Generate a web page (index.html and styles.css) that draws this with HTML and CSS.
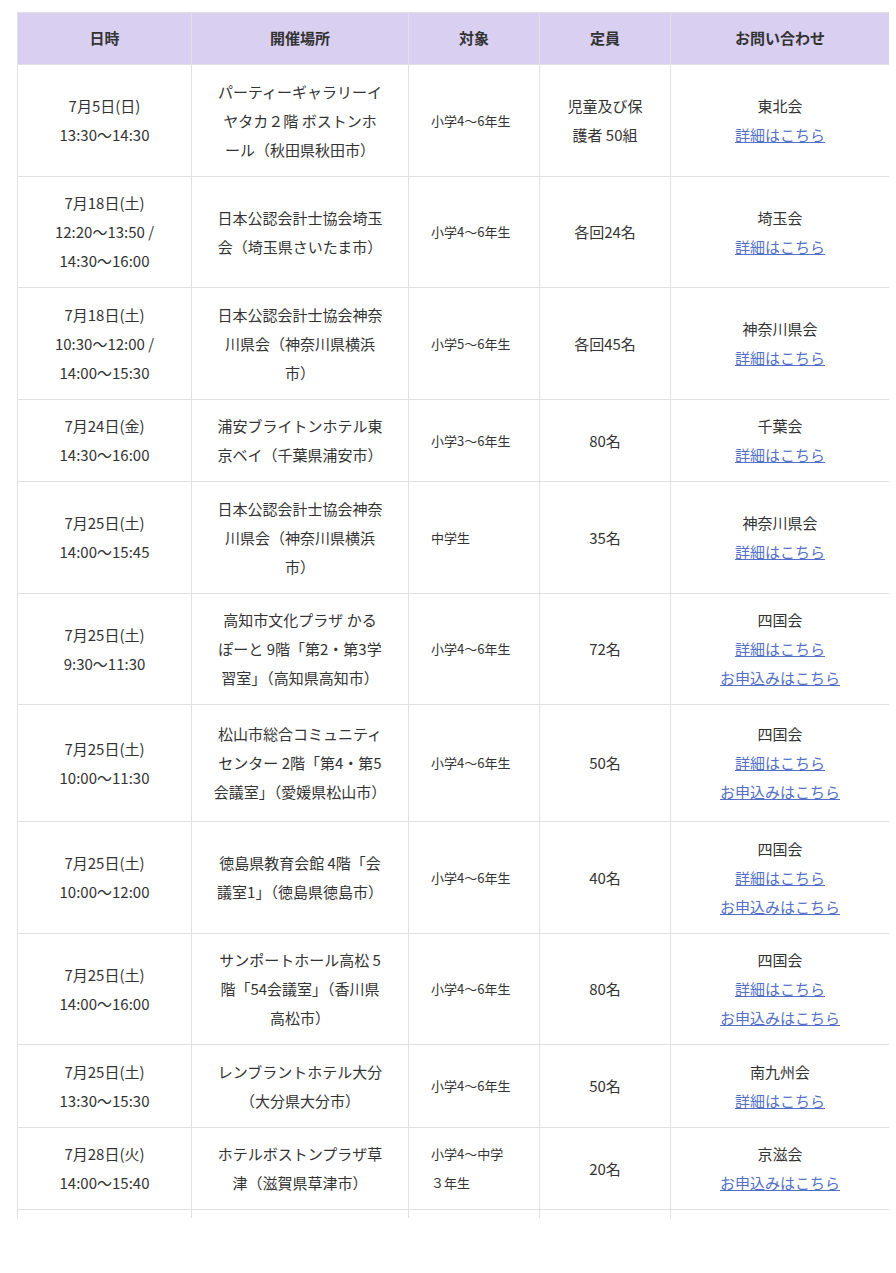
FILE: index.html
```html
<!DOCTYPE html>
<html lang="ja">
<head>
<meta charset="utf-8">
<title>開催一覧</title>
<link rel="stylesheet" href="styles.css">
</head>
<body>
<div class="frame">
<table class="events">
  <colgroup>
    <col class="c-date"><col class="c-venue"><col class="c-target"><col class="c-cap"><col class="c-contact">
  </colgroup>
  <thead>
    <tr><th>日時</th><th>開催場所</th><th>対象</th><th>定員</th><th>お問い合わせ</th></tr>
  </thead>
  <tbody>
    <tr>
      <td>7月5日(日)<br>13:30〜14:30</td>
      <td>パーティーギャラリーイ<br>ヤタカ２階 ボストンホ<br>ール（秋田県秋田市）</td>
      <td class="target">小学4〜6年生</td>
      <td>児童及び保<br>護者 50組</td>
      <td>東北会<br><a href="#">詳細はこちら</a></td>
    </tr>
    <tr>
      <td>7月18日(土)<br>12:20〜13:50 /<br>14:30〜16:00</td>
      <td>日本公認会計士協会埼玉<br>会（埼玉県さいたま市）</td>
      <td class="target">小学4〜6年生</td>
      <td>各回24名</td>
      <td>埼玉会<br><a href="#">詳細はこちら</a></td>
    </tr>
    <tr>
      <td>7月18日(土)<br>10:30〜12:00 /<br>14:00〜15:30</td>
      <td>日本公認会計士協会神奈<br>川県会（神奈川県横浜<br>市）</td>
      <td class="target">小学5〜6年生</td>
      <td>各回45名</td>
      <td>神奈川県会<br><a href="#">詳細はこちら</a></td>
    </tr>
    <tr>
      <td>7月24日(金)<br>14:30〜16:00</td>
      <td>浦安ブライトンホテル東<br>京ベイ（千葉県浦安市）</td>
      <td class="target">小学3〜6年生</td>
      <td>80名</td>
      <td>千葉会<br><a href="#">詳細はこちら</a></td>
    </tr>
    <tr>
      <td>7月25日(土)<br>14:00〜15:45</td>
      <td>日本公認会計士協会神奈<br>川県会（神奈川県横浜<br>市）</td>
      <td class="target">中学生</td>
      <td>35名</td>
      <td>神奈川県会<br><a href="#">詳細はこちら</a></td>
    </tr>
    <tr>
      <td>7月25日(土)<br>9:30〜11:30</td>
      <td>高知市文化プラザ かる<br>ぽーと 9階「第2・第3学<br>習室」（高知県高知市）</td>
      <td class="target">小学4〜6年生</td>
      <td>72名</td>
      <td>四国会<br><a href="#">詳細はこちら</a><br><a href="#">お申込みはこちら</a></td>
    </tr>
    <tr class="tall">
      <td>7月25日(土)<br>10:00〜11:30</td>
      <td>松山市総合コミュニティ<br>センター 2階「第4・第5<br>会議室」（愛媛県松山市）</td>
      <td class="target">小学4〜6年生</td>
      <td>50名</td>
      <td>四国会<br><a href="#">詳細はこちら</a><br><a href="#">お申込みはこちら</a></td>
    </tr>
    <tr>
      <td>7月25日(土)<br>10:00〜12:00</td>
      <td>徳島県教育会館 4階「会<br>議室1」（徳島県徳島市）</td>
      <td class="target">小学4〜6年生</td>
      <td>40名</td>
      <td>四国会<br><a href="#">詳細はこちら</a><br><a href="#">お申込みはこちら</a></td>
    </tr>
    <tr>
      <td>7月25日(土)<br>14:00〜16:00</td>
      <td>サンポートホール高松 5<br>階「54会議室」（香川県<br>高松市）</td>
      <td class="target">小学4〜6年生</td>
      <td>80名</td>
      <td>四国会<br><a href="#">詳細はこちら</a><br><a href="#">お申込みはこちら</a></td>
    </tr>
    <tr>
      <td>7月25日(土)<br>13:30〜15:30</td>
      <td>レンブラントホテル大分<br>（大分県大分市）</td>
      <td class="target">小学4〜6年生</td>
      <td>50名</td>
      <td>南九州会<br><a href="#">詳細はこちら</a></td>
    </tr>
    <tr>
      <td>7月28日(火)<br>14:00〜15:40</td>
      <td>ホテルボストンプラザ草<br>津（滋賀県草津市）</td>
      <td class="target">小学4〜中学<br>３年生</td>
      <td>20名</td>
      <td>京滋会<br><a href="#">お申込みはこちら</a></td>
    </tr>
    <tr>
      <td>&nbsp;</td><td>&nbsp;</td><td class="target">&nbsp;</td><td>&nbsp;</td><td>&nbsp;</td>
    </tr>
  </tbody>
</table>
</div>
</body>
</html>
```

FILE: styles.css
```css
html, body {
  margin: 0;
  padding: 0;
  background: #ffffff;
}

body {
  font-family: "Noto Sans CJK JP", "Noto Sans", sans-serif;
  color: #333333;
  font-size: 15px;
}

.frame {
  margin: 12px 0 0 17px;
  width: 872px;
  height: 1206px;
  overflow: hidden;
}

.events {
  width: 872px;
  border-collapse: collapse;
  table-layout: fixed;
}

.c-date { width: 174px; }
.c-venue { width: 217px; }
.c-target { width: 131px; }
.c-cap { width: 131px; }
.c-contact { width: 219px; }

.events th,
.events td {
  border: 1px solid #e1e1e1;
  text-align: center;
  vertical-align: middle;
  line-height: 29px;
  padding: 11.5px 10px 12px;
}

.events th {
  background: #d9cff1;
  font-weight: bold;
  font-size: 15px;
  padding: 10px 10px 12px;
}

.events td.target {
  text-align: left;
  font-size: 13px;
  padding-left: 22px;
}

.events tr.tall td {
  padding-top: 14px;
  padding-bottom: 15px;
}

.events a {
  color: #5470c6;
  text-decoration: underline;
}
```
